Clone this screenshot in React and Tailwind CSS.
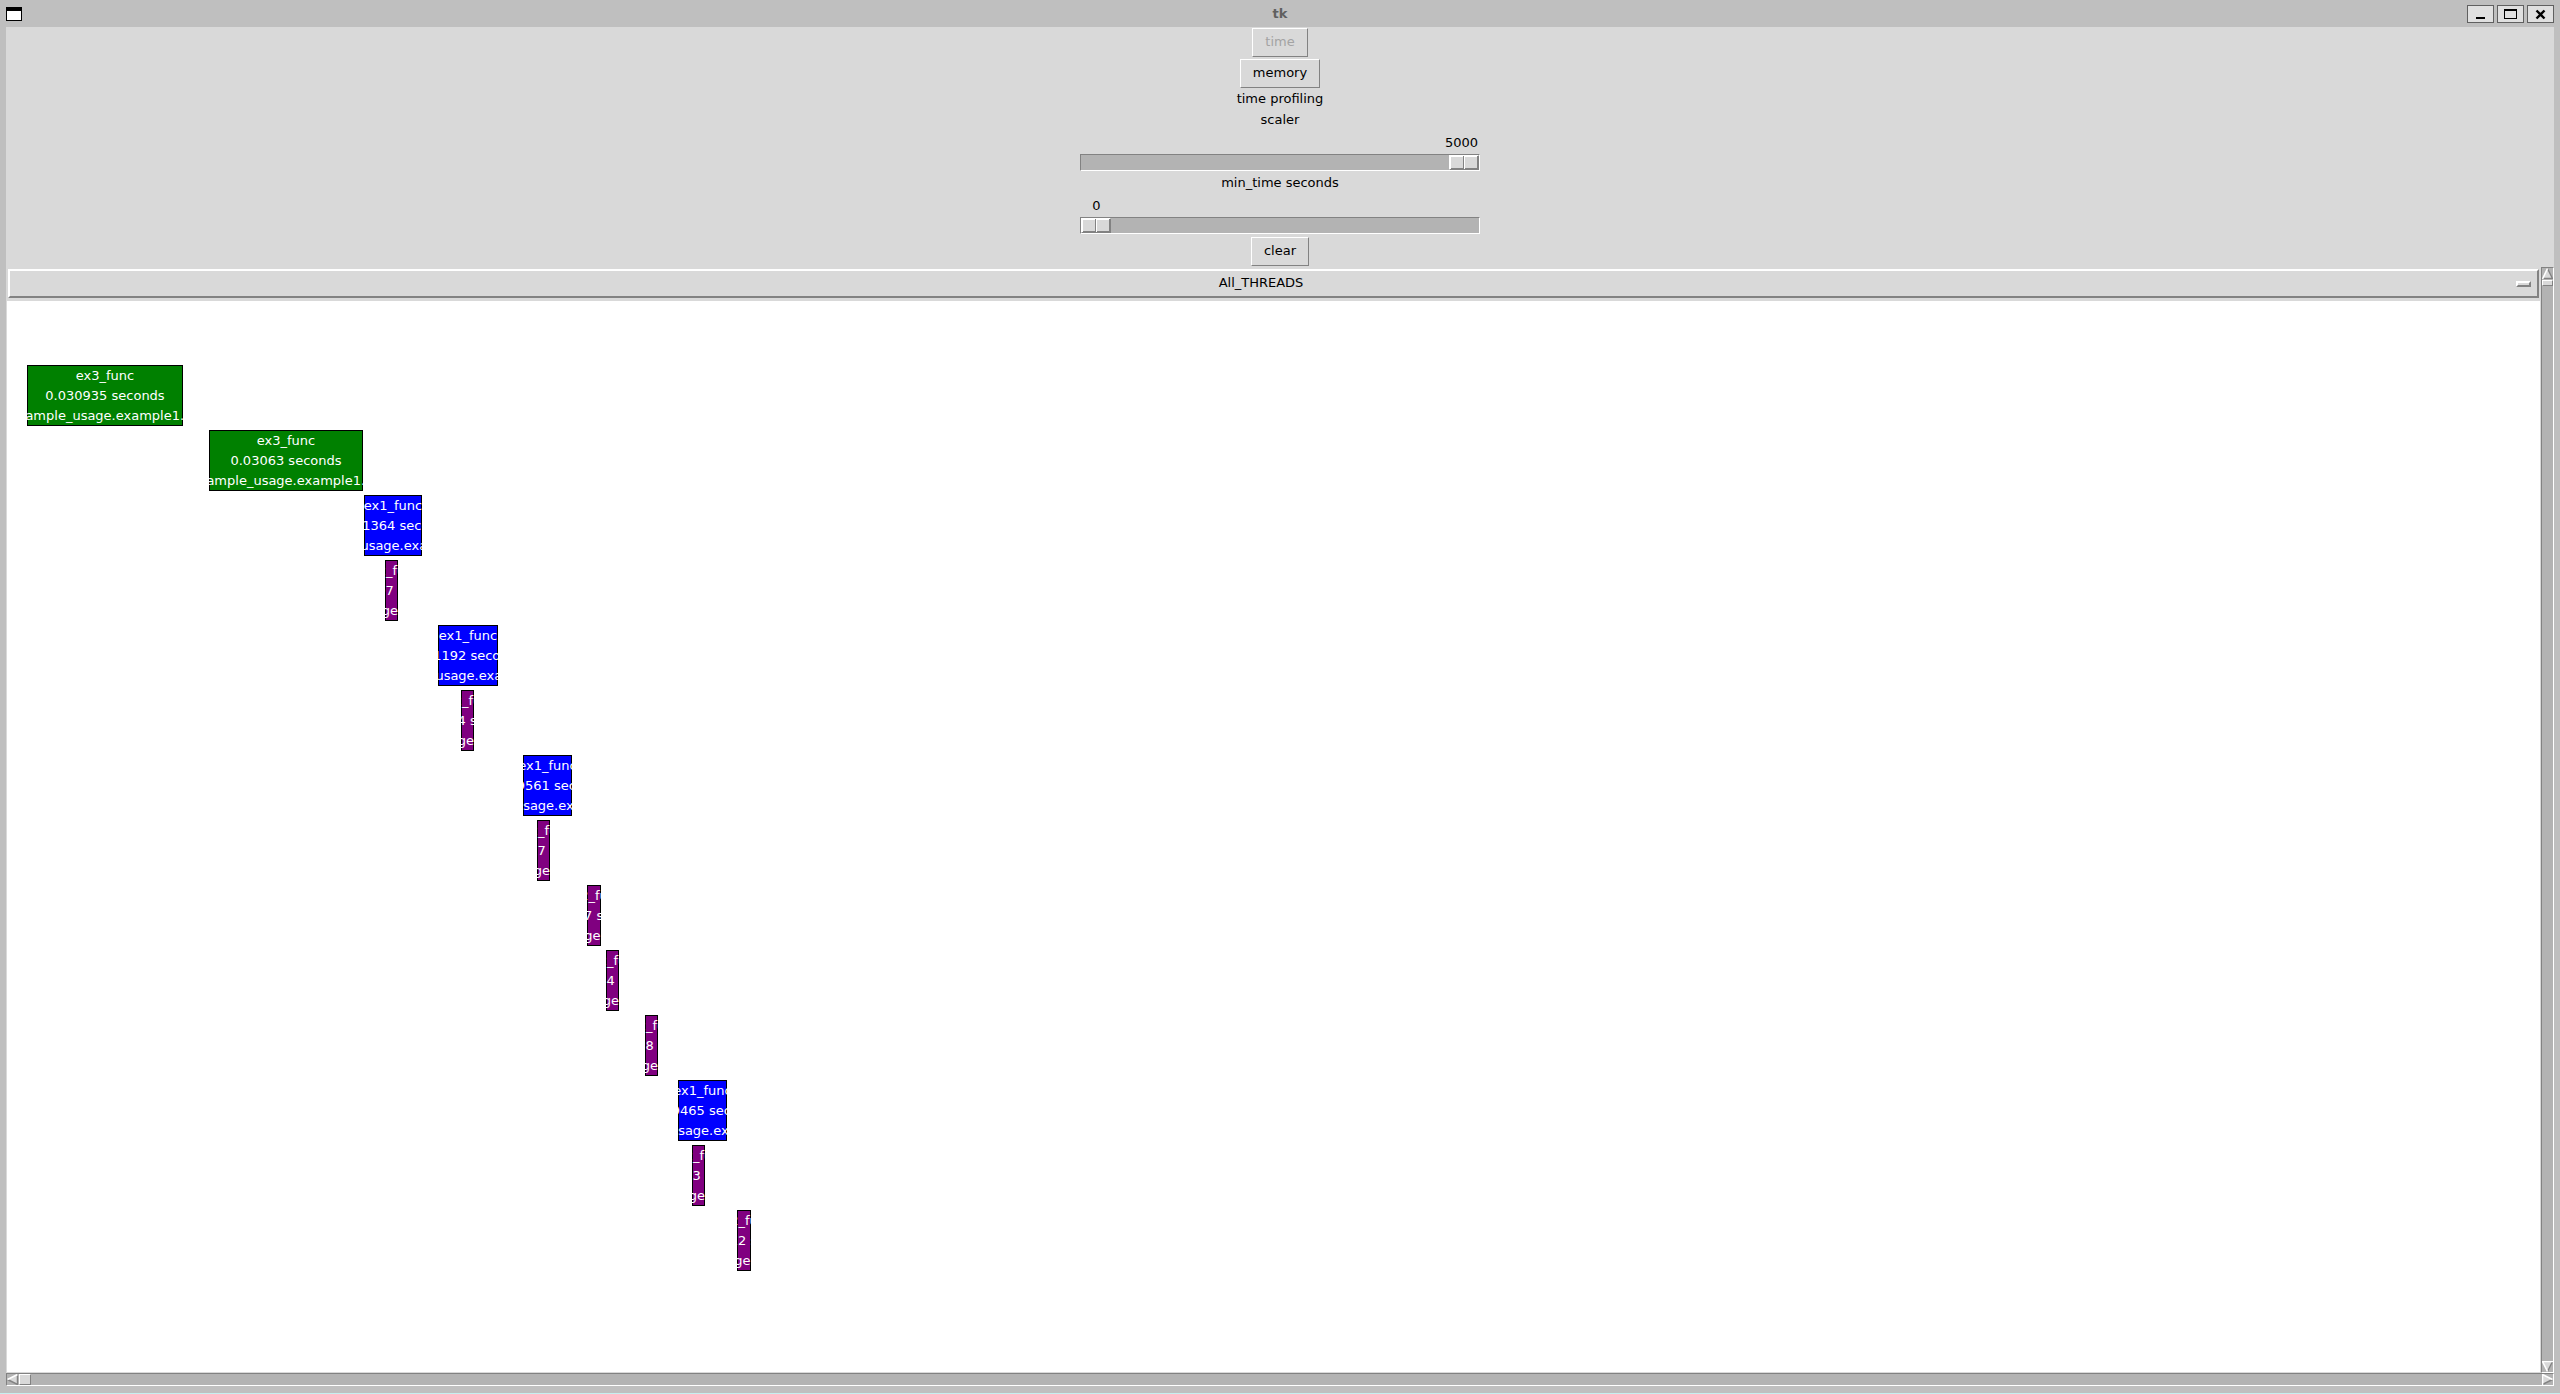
import React, { useState } from "react";

const bevel = "border border-t-white border-l-white border-b-[#828282] border-r-[#828282]";

const calls = [
  { x: 20, w: 156, kind: "green", name: "ex3_func", time: "0.030935" },
  { x: 202, w: 154, kind: "green", name: "ex3_func", time: "0.03063" },
  { x: 357, w: 58, kind: "blue", name: "ex1_func", time: "0.011364" },
  { x: 378, w: 13, kind: "purple", name: "ex2_func", time: "0.002497" },
  { x: 431, w: 60, kind: "blue", name: "ex1_func", time: "0.01192" },
  { x: 454, w: 13, kind: "purple", name: "ex2_func", time: "0.00244" },
  { x: 516, w: 49, kind: "blue", name: "ex1_func", time: "0.009561" },
  { x: 530, w: 13, kind: "purple", name: "ex2_func", time: "0.002417" },
  { x: 580, w: 14, kind: "purple", name: "ex2_func", time: "0.00257" },
  { x: 599, w: 13, kind: "purple", name: "ex2_func", time: "0.002434" },
  { x: 638, w: 13, kind: "purple", name: "ex2_func", time: "0.002428" },
  { x: 671, w: 49, kind: "blue", name: "ex1_func", time: "0.009465" },
  { x: 685, w: 13, kind: "purple", name: "ex2_func", time: "0.002423" },
  { x: 730, w: 14, kind: "purple", name: "ex2_func", time: "0.002612" },
];

const fills = { green: "bg-[#008000]", blue: "bg-[#0000ff]", purple: "bg-[#800080]" };

function TitleBar() {
  const btn = "flex h-[18px] w-[27px] items-center justify-center border border-[#606060] bg-[#e0e0e0]";
  return (
    <header className="grid h-[27px] shrink-0 grid-cols-3 items-center px-[6px]">
      <svg width="16" height="14" viewBox="0 0 16 14" shapeRendering="crispEdges">
        <rect width="16" height="14" fill="#000" />
        <rect x="1" y="4" width="14" height="9" fill="#fff" />
      </svg>
      <h1 className="text-center text-[13px] leading-[20px] font-bold text-[#606060]">tk</h1>
      <div className="flex justify-end gap-[3px]">
        <button aria-label="Minimize" className={btn}>
          <svg width="17" height="14" shapeRendering="crispEdges"><rect x="4" y="10" width="9" height="2" /></svg>
        </button>
        <button aria-label="Maximize" className={btn}>
          <svg width="17" height="14" shapeRendering="crispEdges">
            <rect x="2" y="2" width="13" height="10" /><rect x="3" y="4" width="11" height="7" fill="#e0e0e0" />
          </svg>
        </button>
        <button aria-label="Close" className={btn}>
          <svg width="17" height="14"><path d="M4.5 3.5 L12.5 11.5 M12.5 3.5 L4.5 11.5" stroke="#000" strokeWidth="2.4" /></svg>
        </button>
      </div>
    </header>
  );
}

function PushButton({ children, disabled }) {
  return (
    <button
      disabled={disabled}
      className={`${bevel} mt-px mb-px h-[29px] bg-[#d9d9d9] px-[12px] pb-px leading-[20px] disabled:text-[#a3a3a3]`}
    >
      {children}
    </button>
  );
}

function Scale({ id, label, max, initial }) {
  const [value, setValue] = useState(initial);
  const share = value / max;
  return (
    <>
      <label htmlFor={id} className="h-[21px] leading-[20px]">{label}</label>
      <div className="h-[42px] w-[400px] pt-[2px]">
        <div className="flex h-[21px] pr-[2px] leading-[20px]">
          <span style={{ flexGrow: share }} />
          <output htmlFor={id} className="w-[33px] text-center">{value}</output>
          <span style={{ flexGrow: 1 - share }} />
        </div>
        <input
          id={id}
          type="range"
          min="0"
          max={max}
          value={value}
          onChange={(e) => setValue(Number(e.target.value))}
          className="block h-[17px] w-full appearance-none border border-t-[#828282] border-r-white border-b-white border-l-[#828282] bg-[#b3b3b3] [&::-webkit-slider-thumb]:h-[15px] [&::-webkit-slider-thumb]:w-[30px] [&::-webkit-slider-thumb]:appearance-none [&::-webkit-slider-thumb]:border [&::-webkit-slider-thumb]:border-t-white [&::-webkit-slider-thumb]:border-l-white [&::-webkit-slider-thumb]:border-r-[#828282] [&::-webkit-slider-thumb]:border-b-[#828282] [&::-webkit-slider-thumb]:bg-[#d9d9d9] [&::-webkit-slider-thumb]:bg-[linear-gradient(to_right,white_1px,transparent_1px_13px,#828282_13px),linear-gradient(to_bottom,white_1px,transparent_1px_12px,#828282_12px)] [&::-webkit-slider-thumb]:bg-[length:14px_13px]"
        />
      </div>
    </>
  );
}

const arrowEdges = {
  up: { fill: "5.5,0 11,11 0,11", light: "M0.5 11 L5.5 0.5", dark: "M5.5 0.5 L10.5 10.5 H0" },
  down: { fill: "0,0 11,0 5.5,11", light: "M5.5 10.5 L0.5 0.5 H11", dark: "M10.5 0.5 L5.5 10.5" },
  left: { fill: "0,5.5 11,0 11,11", light: "M0.5 5.5 L10.5 0.5", dark: "M10.5 0 V10.5 L0.5 5.5" },
  right: { fill: "0,0 11,5.5 0,11", light: "M0.5 11 V0.5 L10.5 5.5", dark: "M10.5 5.5 L0.5 10.5" },
};

function Arrow({ dir }) {
  const a = arrowEdges[dir];
  return (
    <button aria-label={`Scroll ${dir}`} className="block size-[11px] shrink-0">
      <svg width="11" height="11" viewBox="0 0 11 11">
        <polygon points={a.fill} fill="#d9d9d9" />
        <path d={a.dark} stroke="#828282" strokeWidth="1.4" fill="none" />
        <path d={a.light} stroke="#fff" strokeWidth="1.6" fill="none" />
      </svg>
    </button>
  );
}

const trough = "flex shrink-0 border border-t-[#828282] border-l-[#828282] border-b-white border-r-white bg-[#b3b3b3]";

function CallBox({ call, row }) {
  return (
    <div
      className={`absolute flex h-[61px] flex-col items-center overflow-hidden pt-px whitespace-nowrap text-white shadow-[inset_0_0_0_1px_#000] ${fills[call.kind]}`}
      style={{ left: call.x, top: 64 + row * 65, width: call.w }}
    >
      <span className="h-[20px] leading-[20px]">{call.name}</span>
      <span className="h-[20px] leading-[20px]">{call.time} seconds</span>
      <span className="h-[20px] leading-[20px]">example_usage.example1.py</span>
    </div>
  );
}

export default function App() {
  return (
    <div className="flex min-h-screen flex-col border-b border-[#c5f0f0] bg-[#bfbfbf] text-[13px] text-black font-['DejaVu_Sans',sans-serif]">
      <TitleBar />
      <main className="mx-[6px] mb-[7px] flex grow flex-col bg-[#d9d9d9]">
        <section className="flex h-[240px] flex-col items-center">
          <PushButton disabled>time</PushButton>
          <PushButton>memory</PushButton>
          <p className="h-[21px] leading-[20px]">time profiling</p>
          <Scale id="scaler" label="scaler" max={5000} initial={5000} />
          <Scale id="min-time" label="min_time seconds" max={100} initial={0} />
          <PushButton>clear</PushButton>
        </section>
        <div className="flex grow">
          <div className="flex grow flex-col pt-[2px] pr-px pl-px">
            <button className="mx-px flex h-[29px] items-center border-2 border-t-white border-r-[#828282] border-b-[#828282] border-l-white pr-[6px]">
              <span className="grow pr-[4px] pb-px text-center leading-[20px]">All_THREADS</span>
              <span className="h-[6px] w-[15px] border-2 border-t-white border-r-[#828282] border-b-[#828282] border-l-white bg-[#d9d9d9]" />
            </button>
            <div className="relative mt-[3px] mb-px grow overflow-hidden bg-white">
              {calls.map((call, row) => (
                <CallBox key={row} call={call} row={row} />
              ))}
            </div>
          </div>
          <div className={`${trough} w-[13px] flex-col`}>
            <Arrow dir="up" />
            <div className={`${bevel} mt-px h-[6px] bg-[#d9d9d9]`} />
            <div className="grow" />
            <Arrow dir="down" />
          </div>
        </div>
        <div className={`${trough} h-[13px]`}>
          <Arrow dir="left" />
          <div className={`${bevel} ml-px w-[12px] bg-[#d9d9d9]`} />
          <div className="grow" />
          <Arrow dir="right" />
        </div>
      </main>
    </div>
  );
}
